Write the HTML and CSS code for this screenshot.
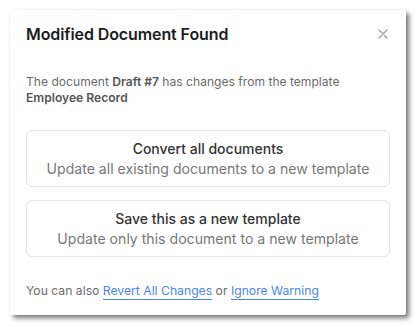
FILE: index.html
```html
<!DOCTYPE html>
<html lang="en">

<head>
    <meta charset="UTF-8">
    <meta name="viewport" content="width=device-width, initial-scale=1.0">
    <title>Modified Document Found</title>
    <link rel="stylesheet" href="styles.css">
</head>

<body>
    <!-- Dialog -->
    <div class="dialog">
        <div class="dialog-header">
            <h2>Modified Document Found</h2>
            <button class="close-btn" aria-label="Close">
                <svg width="10" height="10" viewBox="0 0 10 10">
                    <path d="M1 1 L9 9 M9 1 L1 9" stroke="#9a9a9a" stroke-width="1.2" fill="none" stroke-linecap="round"/>
                </svg>
            </button>
        </div>

        <p class="dialog-text">
            The document <b>Draft #7</b> has changes from the template <b>Employee Record</b>
        </p>

        <div class="options">
            <div class="option">
                <div class="option-title">Convert all documents</div>
                <div class="option-sub">Update all existing documents to a new template</div>
            </div>
            <div class="option">
                <div class="option-title">Save this as a new template</div>
                <div class="option-sub">Update only this document to a new template</div>
            </div>
        </div>

        <p class="dialog-footer">
            You can also <a href="#">Revert All Changes</a> or <a href="#">Ignore Warning</a>
        </p>
    </div>
</body>

</html>
```

FILE: styles.css
```css
/* RESET */
* {
    margin: 0;
    padding: 0;
    box-sizing: border-box;
}

body {
    font-family: 'Inter', 'Noto Sans', Arial, sans-serif;
    background: #ffffff;
    padding: 10px;
}

/* DIALOG */
.dialog {
    width: 396px;
    height: 305px;
    background: #ffffff;
    border-radius: 2px;
    padding: 0 16px;
    box-shadow: 3px 3px 5px rgba(0, 0, 0, 0.55);
}

.dialog-header {
    display: flex;
    align-items: center;
    justify-content: space-between;
    padding: 14px 0;
}

.dialog-header h2 {
    font-size: 16px;
    line-height: 20px;
    font-weight: 600;
    color: #1c1c1c;
    letter-spacing: -0.1px;
}

.close-btn {
    border: none;
    background: none;
    display: flex;
    margin-right: 2px;
    cursor: pointer;
}

.dialog-text {
    margin-top: 16px;
    font-size: 12.1px;
    line-height: 16px;
    color: #6b6b6b;
}

.dialog-text b {
    font-weight: 600;
    color: #555;
}

/* OPTIONS */
.options {
    margin-top: 24px;
    display: flex;
    flex-direction: column;
    gap: 13px;
}

.option {
    border: 1px solid #e6e6e6;
    border-radius: 6px;
    padding: 8px 0 7px;
    text-align: center;
    cursor: pointer;
}

.option-title {
    font-size: 14px;
    line-height: 20px;
    font-weight: 500;
    color: #333;
}

.option-sub {
    font-size: 14.1px;
    line-height: 20px;
    color: #777;
}

/* FOOTER */
.dialog-footer {
    margin-top: 26px;
    font-size: 12.2px;
    line-height: 16px;
    color: #6b6b6b;
}

.dialog-footer a {
    color: #4a86f0;
    text-decoration: none;
    border-bottom: 1px solid #4a86f0;
    padding-bottom: 1px;
}
```
